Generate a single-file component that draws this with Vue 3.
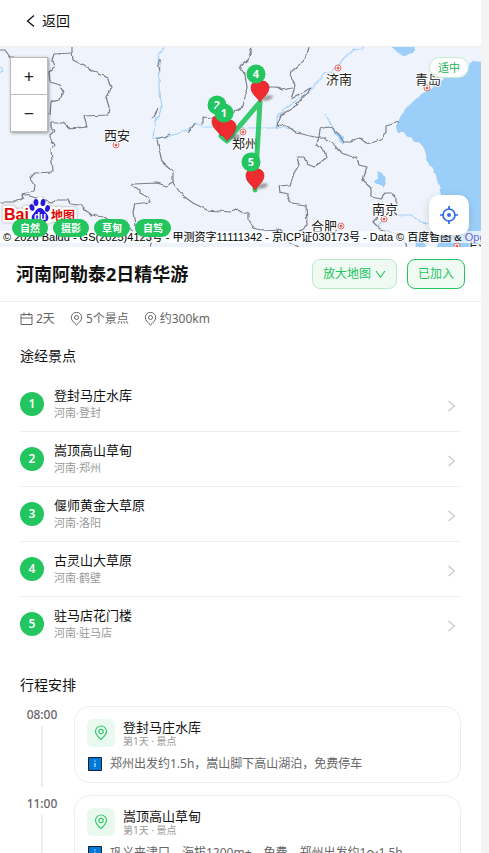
<script setup>
import { ref } from 'vue'

const tags = ['自然', '摄影', '草甸', '自驾']

const spots = [
  { name: '登封马庄水库', place: '河南·登封' },
  { name: '嵩顶高山草甸', place: '河南·郑州' },
  { name: '偃师黄金大草原', place: '河南·洛阳' },
  { name: '古灵山大草原', place: '河南·鹤壁' },
  { name: '驻马店花门楼', place: '河南·驻马店' }
]

const plan = [
  { time: '08:00', name: '登封马庄水库', day: '第1天 · 景点', note: '郑州出发约1.5h，嵩山脚下高山湖泊，免费停车' },
  { time: '11:00', name: '嵩顶高山草甸', day: '第1天 · 景点', note: '巩义夹津口，海拔1200m+，免费，郑州出发约1～1.5h' }
]

const borders = [
  '0,3 5,3 10,10 14,10',
  '72,0 72,6 54,7 52,13 54,20 49,25 50,35 60,38 63,45 60,53 51,55 50,68',
  '72,6 73,13 88,21 95,25 108,31 111,41 106,50 109,60 108,68 83,69 86,75 87,80 70,82 63,76 51,76 51,80 54,84 50,88 50,91 55,98 51,103 53,125 35,126 30,131 35,138 34,145 22,147 23,151 15,155 0,155',
  '22,147 33,150 52,156 55,153 68,153 70,157 80,158 85,163 92,168 103,170 110,175 125,175 133,185',
  '67,78 68,81 83,80 87,78',
  '157,93 160,106 162,115 173,125 173,136 167,139 157,136 133,137 131,139 140,143 140,146 148,150 150,155 135,157 133,165 135,178 148,186 151,200',
  '173,136 182,148 193,156 207,163 230,165 238,162 245,166 249,167 249,173 254,181 262,184 280,183 291,196 299,200',
  '252,0 248,13 240,20 245,28 247,40 243,60 233,65 222,67 212,71 202,70 202,77',
  '266,40 277,40 282,43 293,41',
  '309,0 307,8 299,18 291,25 290,30 295,38 294,43 291,52 311,41 307,46 294,60 281,68 277,78 287,79 297,86 319,91 316,98 324,103 326,111 314,120 307,117 304,110 297,110 299,118 294,126 290,138 279,139 280,145 287,147 291,156 306,158 307,178 299,184',
  '319,91 324,91 334,98 341,106 357,111 359,118 367,120 362,133 371,141 371,150 381,152 386,146 391,146 396,151 396,158',
  '319,91 320,82 327,80 334,81 344,95 351,95 359,90 367,97 381,93 386,85 386,79 399,75',
  '381,166 373,175 380,182 392,185 402,190 407,200',
  '160,12 158,16 160,24',
  '158,61 156,66 153,72',
  '157,92 164,90 170,87',
  '188,85 191,82 195,76'
]

const rivers = [
  '164,0 158,11 160,17 159,40 162,60 155,75 153,91 167,90 182,85 192,80 197,76 203,80 220,80 253,81 275,81 277,79',
  '367,0 354,3 344,11 332,25 324,26 314,40 304,48 287,60 277,70 277,80 294,82',
  '377,180 387,168 411,168 421,175 441,178',
  '325,67 328,73 334,80'
]

const cities = [
  { name: '西安', x: 117, y: 93, dx: 116, dy: 98 },
  { name: '济南', x: 339, y: 37, dx: 338, dy: 21 },
  { name: '青岛', x: 428, y: 37, dx: 427, dy: 41 },
  { name: '郑州', x: 245, y: 101, dx: 243, dy: 85 },
  { name: '南京', x: 385, y: 167, dx: 384, dy: 172 },
  { name: '合肥', x: 324, y: 184, dx: 341, dy: 179 },
  { name: '上海', x: 478, y: 204, dx: 457, dy: 199 }
]

const pins = [
  { x: 221, y: 89 },
  { x: 227, y: 94 },
  { x: 260, y: 55 },
  { x: 255, y: 143 }
]

const badges = [
  { label: '2', x: 217, y: 58 },
  { label: '1', x: 224, y: 66 },
  { label: '4', x: 256, y: 27 },
  { label: '5', x: 251, y: 115 }
]

const joined = ref(true)
</script>

<template>
  <main class="page">
    <header class="topbar">
      <button class="back" type="button">
        <svg width="14" height="14" viewBox="0 0 14 14" fill="none" stroke="currentColor" stroke-width="1.3"><path d="M10 1.500 3.500 7 10 12.500" /></svg>
        返回
      </button>
    </header>

    <section class="map" aria-label="路线地图">
      <svg class="canvas" viewBox="0 0 481 200" preserveAspectRatio="xMidYMid slice">
        <defs>
          <filter id="rough" x="0" y="0" width="481" height="200" filterUnits="userSpaceOnUse" color-interpolation-filters="sRGB">
            <feTurbulence type="fractalNoise" baseFrequency="0.16" numOctaves="1" seed="4" />
            <feDisplacementMap in="SourceGraphic" scale="4" xChannelSelector="R" yChannelSelector="G" />
          </filter>
          <filter id="soft" x="-50%" y="-50%" width="200%" height="200%"><feGaussianBlur stdDeviation="1" /></filter>
        </defs>
        <rect width="481" height="200" fill="#eff3fb" />
        <g filter="url(#rough)">
          <path fill="#9bcffa" d="M490 16 482 14 474 13 469 18 466 26 444 31 439 35 426 45 417 51 406 61 401 68 396 80 397 86 404 86 413 93 424 101 429 118 436 128 441 148 444 162 446 180 440 190 436 202H490Z" />
          <path fill="#9bcffa" d="M389-2 396 5 404 8 413 6 416-2Z" />
          <path fill="#9bcffa" d="M374 133 379 131 377 124 382 126 385 131 386 136 383 142 379 137 374 135Z" />
          <path fill="#9bcffa" d="M331 78 336 84 344 90 342 97 336 88Z" />
          <path fill="#9bcffa" d="M415 188 423 190 426 200 416 200Z" />
          <polyline v-for="(r, i) in rivers" :key="'r' + i" class="river" :points="r" />
          <circle class="river" cx="0" cy="23" r="2.5" />
          <polyline v-for="(b, i) in borders" :key="'b' + i" class="border" :points="b" />
        </g>
        <g v-for="c in cities" :key="c.name">
          <circle :cx="c.dx" :cy="c.dy" r="3" fill="#fff" stroke="#e0736c" />
          <circle :cx="c.dx" :cy="c.dy" r="1.5" fill="#e0635c" />
          <text class="city" :x="c.x" :y="c.y">{{ c.name }}</text>
        </g>
        <polyline class="route" points="255,143 260,55 227,94 221,89" />
        <g v-for="p in pins" :key="p.x" :transform="`translate(${p.x} ${p.y})`">
          <ellipse cx="7" cy="-4" rx="6" ry="2.4" fill="#555" opacity=".55" transform="rotate(-14 7 -4)" filter="url(#soft)" />
          <path d="M0 0C-2-4-9-8-9-14.500A6.500 6.500 0 0 1-3-21Q0-22.500 3-21A6.500 6.500 0 0 1 9-14.500C9-8 2-4 0 0Z" fill="#ee2b2f" stroke="#c81f25" stroke-width=".7" />
        </g>
        <g v-for="b in badges" :key="b.label">
          <circle :cx="b.x" :cy="b.y" r="9.500" fill="#22c55e" />
          <text class="badge-no" :x="b.x" :y="b.y + 4">{{ b.label }}</text>
        </g>
      </svg>

      <div class="zoom">
        <button type="button" aria-label="放大">+</button>
        <button type="button" aria-label="缩小">−</button>
      </div>
      <span class="level">适中</span>

      <svg class="logo" width="78" height="30" viewBox="0 0 78 30" aria-label="Baidu 地图">
        <g stroke="#fff" stroke-width="5" stroke-linejoin="round" class="halo">
          <text x="3" y="24" class="bai">Bai</text>
          <text x="50" y="24" class="ditu">地图</text>
          <path d="M31 12 39 3 48 12 48 25 30 25Z" fill="#fff" />
        </g>
        <text x="3" y="24" class="bai" fill="#e10602">Bai</text>
        <text x="50" y="24" class="ditu" fill="#e10602">地图</text>
        <g fill="#2319dc">
          <ellipse cx="31" cy="11.500" rx="2.400" ry="3.400" transform="rotate(-16 31 11.500)" />
          <ellipse cx="35" cy="6.500" rx="2.400" ry="3.600" />
          <ellipse cx="42" cy="6.500" rx="2.400" ry="3.600" transform="rotate(10 42 6.500)" />
          <ellipse cx="46.500" cy="12.500" rx="2.400" ry="3.400" transform="rotate(14 46.500 12.500)" />
          <path d="M39 12c3 0 4 2.500 6 5 2 2.200 3 4 2 6.500-1 3-5 2.500-8 2.500s-7 .5-8-2.500c-1-2.500 0-4.300 2-6.500 2-2.500 3-5 6-5Z" />
        </g>
        <text x="39" y="24" class="du">du</text>
      </svg>

      <p class="credit">© 2026 Baidu - GS(2025)4123号 - 甲测资字11111342 - 京ICP证030173号 - Data © 百度智图 &amp; <a href="#">OpenStreetMap</a></p>

      <ul class="tags">
        <li v-for="t in tags" :key="t">{{ t }}</li>
      </ul>

      <button class="locate" type="button" aria-label="定位">
        <svg width="20" height="20" viewBox="0 0 20 20" fill="none" stroke="#2f6bea" stroke-width="1.700">
          <circle cx="10" cy="10" r="6" />
          <circle cx="10" cy="10" r="2" fill="#2f6bea" stroke="none" />
          <path d="M10 1v3.500M10 15.500V19M1 10h3.500M15.500 10H19" />
        </svg>
      </button>
    </section>

    <div class="titlebar">
      <h1>河南阿勒泰2日精华游</h1>
      <button class="pill expand" type="button">
        放大地图
        <svg width="11" height="12" viewBox="0 0 11 12" fill="none" stroke="currentColor" stroke-width="1.100"><path d="M1 3l4.500 6L10 3" /></svg>
      </button>
      <button class="pill joined" type="button" @click="joined = !joined">{{ joined ? '已加入' : '加入' }}</button>
    </div>

    <div class="body">
      <ul class="stats">
        <li>
          <svg width="13" height="14" viewBox="0 0 13 14" fill="none" stroke="currentColor"><path d="M1 2.500h11v10H1zM1 6h11M4 .5v3.500M9 .5v3.500" /></svg>
          2天
        </li>
        <li v-for="s in ['5个景点', '约300km']" :key="s">
          <svg width="13" height="14" viewBox="0 0 13 14" fill="none" stroke="currentColor"><path d="M6.500 13C4 10.700 1.300 8.500 1.300 5.500a5.200 5.200 0 0 1 10.400 0c0 3-2.700 5.200-5.200 7.500Z" /><circle cx="6.500" cy="5.500" r="2" /></svg>
          {{ s }}
        </li>
      </ul>

      <h2>途经景点</h2>
      <ol class="spots">
        <li v-for="(s, i) in spots" :key="s.name">
          <a href="#" class="spot">
            <span class="no">{{ i + 1 }}</span>
            <span class="info">
              <span class="name">{{ s.name }}</span>
              <span class="place">{{ s.place }}</span>
            </span>
            <svg width="20" height="18" viewBox="0 0 20 18" fill="none" stroke="#c8c8c8" stroke-width="1.200"><path d="M7.500 6 13.500 11 7.500 16" /></svg>
          </a>
        </li>
      </ol>

      <h2>行程安排</h2>
      <ol class="plan">
        <li v-for="p in plan" :key="p.time">
          <div class="when">
            <time>{{ p.time }}</time>
            <span class="rail"></span>
          </div>
          <article class="card">
            <div class="head">
              <span class="icon">
                <svg width="14" height="16" viewBox="0 0 14 16" fill="none" stroke="#36c96c" stroke-width="1.200"><path d="M7 14.500C4.200 12 1.500 9.500 1.500 6.500a5.500 5.500 0 0 1 11 0c0 3-2.700 5.500-5.500 8Z" /><circle cx="7" cy="6.500" r="2.200" /></svg>
              </span>
              <div class="info">
                <h3 class="name">{{ p.name }}</h3>
                <span class="day">{{ p.day }}</span>
              </div>
            </div>
            <p class="note">
              <svg width="14" height="14" viewBox="0 0 14 14"><path d="M.5.5h13v13H.5z" fill="#0078d7" stroke="#16202c" /><path d="M7 6v4M7 3.500v1.200" stroke="#cfe6fa" stroke-width="1.200" /></svg>
              {{ p.note }}
            </p>
          </article>
        </li>
      </ol>
    </div>
  </main>
</template>

<style>
body {
  margin: 0;
  background: #f4f4f4;
}
</style>

<style scoped>
.page {
  min-height: 100vh;
  margin-right: 8px;
  background: #fff;
  color: #111;
  font-family: "Noto Sans", "Noto Sans CJK SC", sans-serif;
  font-size: 13px;
}
button {
  font-family: inherit;
  color: inherit;
  cursor: pointer;
}
a {
  color: inherit;
  text-decoration: none;
}
ul, ol {
  list-style: none;
  margin: 0;
  padding: 0;
}
h1, h2, h3, p {
  margin: 0;
}
.topbar {
  display: flex;
  align-items: center;
  height: 47px;
  padding: 0 24px 4px;
  border-bottom: 1px solid #eee;
  box-sizing: border-box;
}
.back {
  display: flex;
  align-items: center;
  gap: 4px;
  padding: 0;
  border: 0;
  background: none;
  font-size: 14px;
  line-height: 20px;
}
.map {
  position: relative;
  height: 200px;
  overflow: hidden;
}
.canvas {
  display: block;
  width: 100%;
  height: 100%;
}
.border {
  fill: none;
  stroke: #7b7e87;
  stroke-width: 1.2;
  stroke-linejoin: round;
}
.river {
  fill: none;
  stroke: #a5d3fa;
  stroke-width: 1.2;
}
.route {
  fill: none;
  stroke: #22c55e;
  stroke-width: 5;
  stroke-opacity: .9;
  stroke-linecap: round;
  stroke-linejoin: round;
}
.city {
  font-size: 13px;
  text-anchor: middle;
  fill: #222;
  stroke: #fff;
  stroke-width: 2px;
  paint-order: stroke;
}
.badge-no {
  font-size: 11px;
  font-weight: 700;
  text-anchor: middle;
  fill: #fff;
}
.zoom {
  position: absolute;
  left: 10px;
  top: 10px;
  display: flex;
  flex-direction: column;
  gap: 1px;
  border: 1px solid #bbb;
  background: #bbb;
  box-shadow: 1px 1px 3px rgba(0, 0, 0, .4);
}
.zoom button {
  width: 36px;
  height: 36px;
  padding: 0;
  border: 0;
  background: #fff;
  color: #222;
  font-size: 18px;
  line-height: 36px;
}
.level {
  position: absolute;
  right: 12px;
  top: 10px;
  padding: 0 8px;
  border: 1px solid #c5ecd3;
  border-radius: 11px;
  background: rgba(255, 255, 255, .9);
  color: #22b455;
  font-size: 11px;
  line-height: 19px;
}
.logo {
  position: absolute;
  left: 1px;
  bottom: 21px;
}
.halo {
  filter: drop-shadow(0 0 1px #999);
}
.bai {
  font: 700 16px "Liberation Sans", sans-serif;
}
.ditu {
  font-size: 12px;
  font-weight: 700;
}
.du {
  font: 700 10px "Liberation Sans", sans-serif;
  text-anchor: middle;
  fill: #fff;
}
.credit {
  position: absolute;
  left: 0;
  bottom: 4px;
  width: 100%;
  padding-left: 3px;
  box-sizing: border-box;
  overflow: hidden;
  background: rgba(255, 255, 255, .7);
  color: #000;
  font-family: "Liberation Sans", "Noto Sans CJK SC", sans-serif;
  font-size: 11px;
  line-height: 12px;
  white-space: nowrap;
}
.credit a {
  color: #6a6ad0;
}
.tags {
  position: absolute;
  left: 12px;
  bottom: 10px;
  display: flex;
  gap: 5px;
}
.tags li {
  padding: 0 8px;
  border-radius: 9px;
  background: #22c55e;
  color: #fff;
  font-size: 10px;
  font-weight: 700;
  line-height: 18px;
}
.locate {
  position: absolute;
  right: 12px;
  bottom: 12px;
  display: grid;
  place-items: center;
  width: 40px;
  height: 40px;
  padding: 0;
  border: 0;
  border-radius: 10px;
  background: #fff;
  box-shadow: 0 2px 8px rgba(0, 0, 0, .15);
}
.titlebar {
  display: flex;
  align-items: center;
  gap: 10px;
  padding: 12px 16px;
  border-bottom: 1px solid #eee;
}
h1 {
  flex: 1;
  font-size: 18px;
  line-height: 30px;
}
.pill {
  display: flex;
  align-items: center;
  gap: 4px;
  height: 30px;
  padding: 0 10px;
  border: 1px solid #22c55e;
  border-radius: 8px;
  background: #effaf3;
  color: #22c55e;
  font-size: 12px;
  line-height: 18px;
  white-space: nowrap;
}
.expand {
  border-color: #b9eccb;
}
.body {
  padding: 8px 20px 20px;
}
.stats {
  display: flex;
  gap: 15px;
  color: #666;
  font-size: 12px;
  line-height: 18px;
}
.stats li {
  display: flex;
  align-items: center;
  gap: 3px;
}
h2 {
  margin-top: 18px;
  font-size: 14px;
  font-weight: 400;
  line-height: 20px;
}
.spots {
  padding: 11px 0 5px;
}
.spot {
  display: flex;
  align-items: center;
  gap: 10px;
  height: 54px;
  border-bottom: 1px solid #eee;
}
.spots li:last-child .spot {
  border-bottom-color: transparent;
}
.no {
  width: 24px;
  border-radius: 12px;
  background: #22c55e;
  color: #fff;
  font-size: 12px;
  font-weight: 600;
  line-height: 24px;
  text-align: center;
}
.info {
  display: flex;
  flex: 1;
  flex-direction: column;
}
.name {
  font-size: 13px;
  font-weight: 400;
  line-height: 18px;
}
.place {
  color: #999;
  font-size: 11px;
  line-height: 18px;
}
.plan {
  display: flex;
  flex-direction: column;
  gap: 12px;
  margin-top: 11px;
}
.plan li {
  display: flex;
  gap: 10px;
}
.when {
  display: flex;
  flex-direction: column;
  align-items: center;
  gap: 3px;
  width: 44px;
}
time {
  color: #666;
  font-size: 12px;
  font-weight: 500;
  line-height: 17px;
}
.rail {
  flex: 1;
  width: 2px;
  margin-bottom: -4px;
  background: #eee;
}
.card {
  flex: 1;
  padding: 12px 12px 9px;
  border: 1px solid #eee;
  border-radius: 16px;
}
.head {
  display: flex;
  align-items: center;
  gap: 8px;
}
.icon {
  display: grid;
  place-items: center;
  width: 28px;
  height: 28px;
  border-radius: 6px;
  background: #e9f9ef;
}
.head .name {
  line-height: 16px;
}
.day {
  color: #999;
  font-size: 10px;
  line-height: 12px;
}
.note {
  display: flex;
  align-items: center;
  gap: 8px;
  margin-top: 8px;
  color: #666;
  font-size: 12px;
  line-height: 18px;
}
.note svg {
  flex: none;
  margin-left: 1px;
}
</style>
